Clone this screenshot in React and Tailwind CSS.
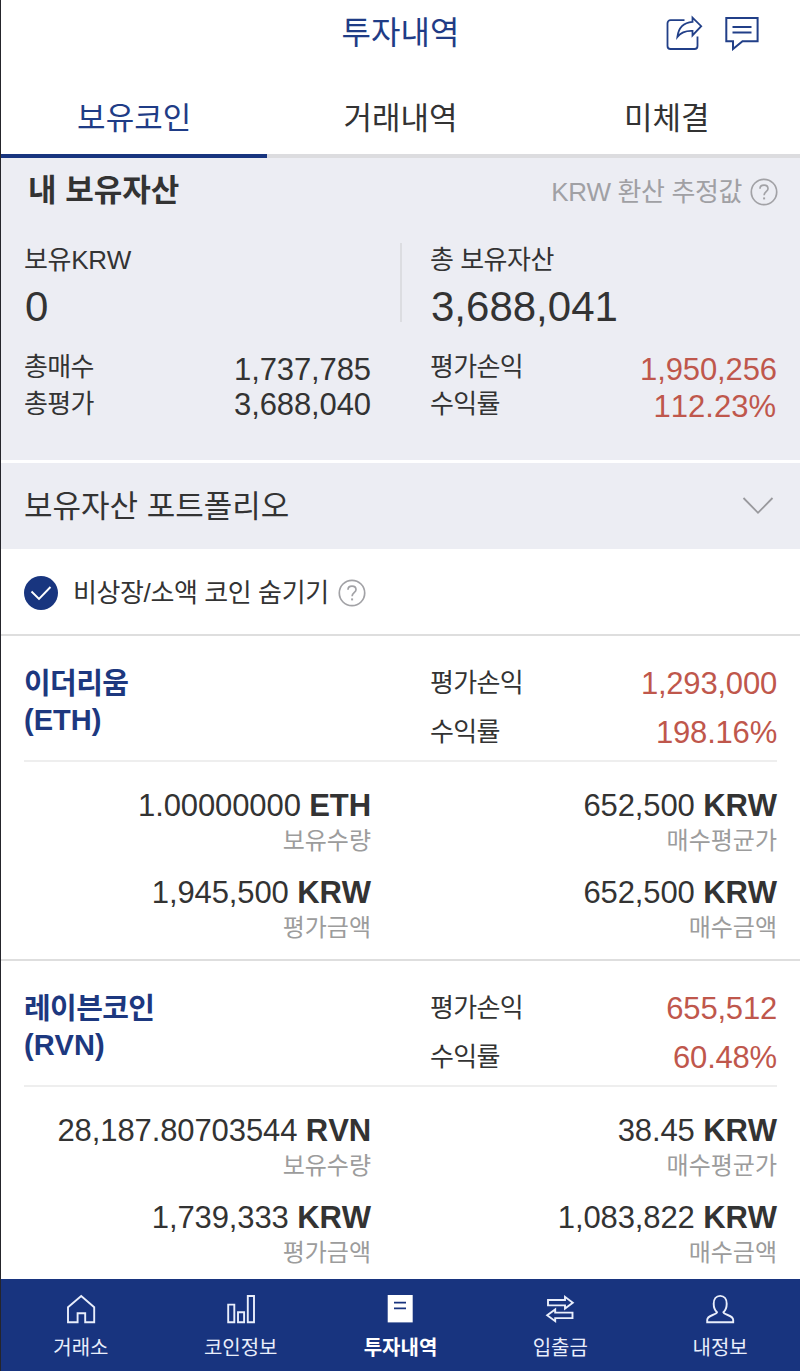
import { useState } from "react";
import clsx from "clsx";

const TABS = ["보유코인", "거래내역", "미체결"];

const COINS = [
  {
    name: "이더리움",
    symbol: "ETH",
    profit: "1,293,000",
    rate: "198.16%",
    amount: "1.00000000",
    avgPrice: "652,500",
    evaluated: "1,945,500",
    bought: "652,500",
  },
  {
    name: "레이븐코인",
    symbol: "RVN",
    profit: "655,512",
    rate: "60.48%",
    amount: "28,187.80703544",
    avgPrice: "38.45",
    evaluated: "1,739,333",
    bought: "1,083,822",
  },
];

const NAV_ITEMS = [
  { label: "거래소", icon: HomeIcon },
  { label: "코인정보", icon: ChartIcon },
  { label: "투자내역", icon: DocumentIcon, active: true },
  { label: "입출금", icon: TransferIcon },
  { label: "내정보", icon: UserIcon },
];

function NavSvg({ children }) {
  return (
    <svg width="30" height="30" viewBox="0 0 30 30" fill="none" stroke="#e9eefb" strokeWidth="1.9">
      {children}
    </svg>
  );
}

function HomeIcon() {
  return (
    <NavSvg>
      <path d="M2 13.2 15.2 2 28.2 13.2V28.2H19.2V19.2H11.6V28.2H2Z" />
    </NavSvg>
  );
}

function ChartIcon() {
  return (
    <NavSvg>
      <path d="M2.2 10.6H8.3V28.2H2.2ZM12 18.2H18.1V28.2H12ZM21.8 2H28V28.2H21.8Z" />
    </NavSvg>
  );
}

function DocumentIcon() {
  return (
    <NavSvg>
      <path d="M2.7 1H27.7V28.4H2.7Z" fill="#fff" stroke="none" />
      <path d="M9 8.7H21M9 14.3H21" stroke="#18347f" strokeWidth="1.7" />
    </NavSvg>
  );
}

function TransferIcon() {
  return (
    <NavSvg>
      <path d="M3 6H20V2.8L27.8 8.7 20 14.6V11.4H3Z" />
      <path d="M27.5 18.6H10.2V15.4L2.2 21.2 10.2 27.2V24.1H27.5Z" />
    </NavSvg>
  );
}

function UserIcon() {
  return (
    <NavSvg>
      <path d="M12 18.2C9.8 16.4 8.7 13.4 8.7 9.8 8.7 5.2 11 1.9 15.2 1.9S21.7 5.2 21.7 9.8C21.7 13.4 20.6 16.4 18.4 18.2 19.5 21.6 28.2 20.6 28.2 26V28.2H2.2V26C2.2 20.6 10.9 21.6 12 18.2Z" />
    </NavSvg>
  );
}

function ShareIcon() {
  return (
    <svg width="38" height="36" viewBox="0 0 38 36" fill="none" stroke="#213f88" strokeWidth="1.8">
      <path d="M19.5 5.2H5.5A3 3 0 0 0 2.5 8.2V31A3 3 0 0 0 5.5 34H29.5A3 3 0 0 0 32.5 31V21.5" />
      <path d="M27.5 2.6 36.2 11.2 27.5 20.4V15.9C21 15.6 16 17.3 12.4 21.9 13.4 13.2 18.5 7.6 27.5 6.9Z" />
    </svg>
  );
}

function MessageIcon() {
  return (
    <svg width="36" height="36" viewBox="0 0 36 36" fill="none" stroke="#213f88" strokeWidth="2">
      <path d="M2.3 3H33.6V26.2H18.5L9 34V26.2H2.3Z" />
      <path d="M8.5 11.9H27.5M8.5 17.5H27.5" />
    </svg>
  );
}

function HelpIcon() {
  return (
    <svg width="28" height="28" viewBox="0 0 28 28" fill="none" stroke="#a2a2a6" strokeWidth="1.7">
      <circle cx="14" cy="14" r="12.7" />
      <path d="M10 10.8C10 8.6 11.6 7.2 14 7.2S18 8.6 18 10.7C18 13.7 14.1 13.8 14.1 17.2" />
      <path d="M14.1 19.4V21.4" strokeWidth="2" />
    </svg>
  );
}

function ProfitRow({ label, value }) {
  return (
    <div className="flex h-[49px] items-center justify-between">
      <span className="pb-[2px] text-[26px] tracking-[-0.7px]">{label}</span>
      <span className="text-[31px] tracking-[-0.2px] text-[#bf574c]">{value}</span>
    </div>
  );
}

function Holding({ value, unit, label }) {
  return (
    <div className="text-right">
      <div className="text-[31px] leading-10 tracking-[-0.1px]">
        {value} <b>{unit}</b>
      </div>
      <div className="text-2xl leading-[30px] text-[#9c9c9c]">{label}</div>
    </div>
  );
}

function CoinCard({ coin }) {
  return (
    <section className="h-[325px] border-b-2 border-[#dedede] px-[23px]">
      <div className="grid h-[126px] grid-cols-2 gap-[59px] border-b-2 border-[#eeeeee]">
        <div className="pt-[30px] text-[29px] leading-9 font-bold text-[#1d387f]">
          <div className="tracking-[-0.6px]">{coin.name}</div>
          <div>({coin.symbol})</div>
        </div>
        <div className="pt-6">
          <ProfitRow label="평가손익" value={coin.profit} />
          <ProfitRow label="수익률" value={coin.rate} />
        </div>
      </div>
      <div className="grid grid-cols-2 gap-x-[59px] gap-y-[17px] pt-6">
        <Holding value={coin.amount} unit={coin.symbol} label="보유수량" />
        <Holding value={coin.avgPrice} unit="KRW" label="매수평균가" />
        <Holding value={coin.evaluated} unit="KRW" label="평가금액" />
        <Holding value={coin.bought} unit="KRW" label="매수금액" />
      </div>
    </section>
  );
}

export default function App() {
  const [tab, setTab] = useState("보유코인");
  const [hideSmall, setHideSmall] = useState(true);

  return (
    <div className="flex h-[1371px] w-[800px] flex-col overflow-hidden border-l border-[#25252b] bg-white font-['Liberation_Sans','Noto_Sans_CJK_KR',sans-serif] text-[#333333] [font-kerning:none]">
      {/* Header */}
      <header className="grid h-[68px] shrink-0 grid-cols-[1fr_auto_1fr] items-start">
        <h1 className="col-start-2 text-[32px] leading-[66px] text-[#1f3c86]">투자내역</h1>
        <div className="flex justify-end gap-[21px] pt-[15px] pr-[40px]">
          <ShareIcon />
          <MessageIcon />
        </div>
      </header>

      {/* Tabs */}
      <div className="grid h-[90px] shrink-0 grid-cols-3">
        {TABS.map((t) => (
          <button
            key={t}
            onClick={() => setTab(t)}
            className={clsx(
              "border-b-4 pt-4 text-[31px]",
              t === tab ? "border-[#18357f] text-[#1f3c86]" : "border-[#dcdcdf]"
            )}
          >
            {t}
          </button>
        ))}
      </div>

      {/* My assets */}
      <section className="h-[305px] shrink-0 border-b-[3px] border-white bg-[#ecedf3] px-[23px]">
        <div className="flex h-[67px] items-center justify-between pl-1">
          <h2 className="text-[31px] font-bold">내 보유자산</h2>
          <div className="-mr-px flex items-center gap-2 text-[26px] tracking-[-0.4px] text-[#a0a0a4]">
            <span className="pt-px">KRW 환산 추정값</span>
            <HelpIcon />
          </div>
        </div>
        <div className="mt-[18px] grid grid-cols-[378px_1fr]">
          <div className="h-[79px] border-r-2 border-[#dcdde1]">
            <div className="pt-px text-[26px] leading-8 tracking-[-0.3px]">보유KRW</div>
            <div className="mt-[7px] pl-px text-[42px] leading-[48px]">0</div>
          </div>
          <div className="pl-[28px]">
            <div className="pt-px text-[26px] leading-8 tracking-[-0.5px]">총 보유자산</div>
            <div className="mt-[7px] pl-px text-[42px] leading-[48px]">3,688,041</div>
          </div>
        </div>
        <div className="mt-[18px] grid grid-cols-2 gap-[59px] text-[26px] leading-[37px] tracking-[-0.7px]">
          <div>
            <div className="flex h-[37px] justify-between">
              총매수<span className="pt-[2px] text-[31px] tracking-[-0.1px]">1,737,785</span>
            </div>
            <div className="flex h-[37px] justify-between">
              총평가<span className="text-[31px] tracking-[-0.1px]">3,688,040</span>
            </div>
          </div>
          <div>
            <div className="flex h-[37px] justify-between">
              평가손익<span className="pt-[2px] text-[31px] tracking-[-0.1px] text-[#bf574c]">1,950,256</span>
            </div>
            <div className="flex h-[37px] justify-between">
              수익률<span className="pt-[2px] pr-px text-[31px] tracking-normal text-[#bf574c]">112.23%</span>
            </div>
          </div>
        </div>
      </section>

      {/* Portfolio toggle */}
      <button className="flex h-[86px] shrink-0 items-center justify-between bg-[#ecedf3] pr-[26px] pl-[23px]">
        <span className="pt-[3px] text-[31px]">보유자산 포트폴리오</span>
        <svg width="32" height="20" viewBox="0 0 32 20" fill="none" stroke="#99999d" strokeWidth="1.8">
          <path d="M1.5 2 16 16.8 30.5 2" />
        </svg>
      </button>

      {/* Filter */}
      <div className="flex h-[87px] shrink-0 items-center border-b-2 border-[#dedede] pt-[2px] pl-[23px]">
        <button
          onClick={() => setHideSmall(!hideSmall)}
          className={clsx(
            "flex size-[34px] items-center justify-center rounded-full",
            hideSmall ? "bg-[#18357f]" : "bg-gray-300"
          )}
        >
          <svg width="34" height="34" viewBox="0 0 34 34" fill="none" stroke="#fff" strokeWidth="1.9">
            <path d="M7.5 15.5 15 23 26.5 11" />
          </svg>
        </button>
        <span className="mr-[9px] ml-[15px] pt-[2px] text-[26px] tracking-[-0.4px]">비상장/소액 코인 숨기기</span>
        <HelpIcon />
      </div>

      {/* Coin list */}
      <main className="min-h-0 flex-1 overflow-hidden">
        {COINS.map((coin) => (
          <CoinCard key={coin.symbol} coin={coin} />
        ))}
      </main>

      {/* Bottom navigation */}
      <nav className="grid h-[92px] shrink-0 grid-cols-5 bg-[#18347f] text-[#e9eefb]">
        {NAV_ITEMS.map(({ label, icon: Icon, active }) => (
          <a key={label} className="flex flex-col items-center pt-[15px]">
            <Icon />
            <span className={clsx("mt-[9px] text-xl leading-[30px]", active && "font-bold text-white")}>{label}</span>
          </a>
        ))}
      </nav>
    </div>
  );
}
